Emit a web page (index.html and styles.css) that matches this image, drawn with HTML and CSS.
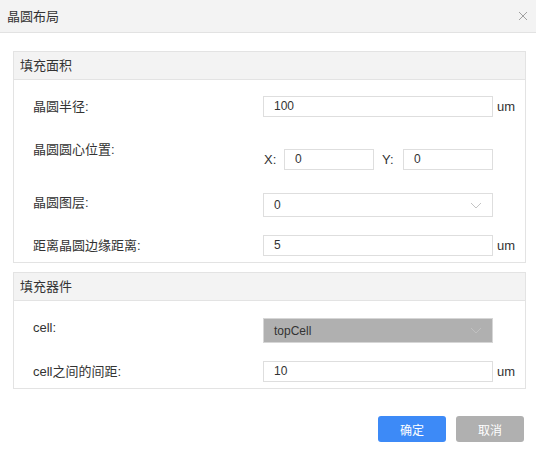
FILE: index.html
```html
<!DOCTYPE html>
<html>
<head>
<meta charset="utf-8">
<link rel="stylesheet" href="styles.css">
</head>
<body>
<div class="dialog">
  <div class="dlg-head">
    <span class="dlg-title">晶圆布局</span>
    <svg class="close" width="10" height="10" viewBox="0 0 10 10"><path d="M1 1L9 9M9 1L1 9" stroke="#a0a0a0" stroke-width="1" fill="none"/></svg>
  </div>
  <div class="dlg-body">
    <div class="section">
      <div class="sec-head">填充面积</div>
      <div class="sec-body">
        <div class="row r1">
          <div class="label">晶圆半径:</div>
          <div class="ctrl"><div class="input">100</div><span class="unit">um</span></div>
        </div>
        <div class="row r2">
          <div class="label">晶圆圆心位置:</div>
          <div class="ctrl xy">
            <span class="axis">X:</span><div class="input small">0</div>
            <span class="axis ay">Y:</span><div class="input small">0</div>
          </div>
        </div>
        <div class="row r3">
          <div class="label">晶圆图层:</div>
          <div class="ctrl"><div class="select">0<svg class="chev" width="12" height="7" viewBox="0 0 12 7"><path d="M1 1L6 6L11 1" stroke="#c4c4c4" stroke-width="1" fill="none"/></svg></div></div>
        </div>
        <div class="row r4">
          <div class="label">距离晶圆边缘距离:</div>
          <div class="ctrl"><div class="input">5</div><span class="unit">um</span></div>
        </div>
      </div>
    </div>
    <div class="section s2">
      <div class="sec-head">填充器件</div>
      <div class="sec-body b2">
        <div class="row r5">
          <div class="label">cell:</div>
          <div class="ctrl"><div class="select disabled">topCell<svg class="chev" width="12" height="7" viewBox="0 0 12 7"><path d="M1 1L6 6L11 1" stroke="#c0c0c0" stroke-width="1" fill="none"/></svg></div></div>
        </div>
        <div class="row r6">
          <div class="label">cell之间的间距:</div>
          <div class="ctrl"><div class="input">10</div><span class="unit">um</span></div>
        </div>
      </div>
    </div>
    <div class="footer">
      <button class="btn ok">确定</button>
      <button class="btn cancel">取消</button>
    </div>
  </div>
</div>
</body>
</html>
```

FILE: styles.css
```css
* { box-sizing: border-box; }
html, body { margin: 0; padding: 0; background: #fff; }
body {
  font-family: "Liberation Sans", "Noto Sans CJK SC", Arial, sans-serif;
  font-size: 13px;
  color: #333;
}
.dialog { width: 536px; height: 451px; background: #fff; }
.dlg-head {
  height: 33px;
  background: #f3f3f3;
  border-bottom: 1px solid #e2e2e2;
  display: flex;
  align-items: center;
  justify-content: space-between;
  padding: 0 8px 2px 7px;
}
.dlg-title { font-size: 13px; color: #333; }
.close { display: block; margin-top: 1px; }
.dlg-body { padding: 18px 10px 0 13px; }
.section { border: 1px solid #e3e3e3; }
.s2 { margin-top: 9px; }
.sec-head {
  height: 28px;
  line-height: 27px;
  background: #f3f3f3;
  border-bottom: 1px solid #e3e3e3;
  padding-left: 6px;
  color: #333;
}
.sec-body { padding: 16px 0 6px 19px; }
.b2 { padding-top: 17px; }
.row { display: flex; align-items: flex-start; }
.label { width: 230px; line-height: 21px; }
.ctrl { display: flex; align-items: center; }
.input {
  width: 230px;
  height: 21px;
  border: 1px solid #dedede;
  background: #fff;
  padding-left: 10px;
  font-size: 12px;
  line-height: 19px;
  color: #333;
}
.unit { margin-left: 4px; font-size: 13px; }
.r2 { margin-top: 23px; }
.r2 .label { line-height: 20px; }
.xy { margin-top: 9px; }
.axis { width: 21px; padding-left: 1px; }
.ay { width: 25px; margin-left: 4px; padding-left: 4px; }
.input.small { width: 90px; }
.r3 { margin-top: 23px; }
.r3 .label { line-height: 19px; }
.select {
  width: 230px;
  height: 24px;
  border: 1px solid #dedede;
  background: #fff;
  padding-left: 10px;
  font-size: 12px;
  line-height: 22px;
  display: flex;
  align-items: center;
  justify-content: space-between;
  padding-right: 10px;
}
.select.disabled { background: #b0b0b0; border-color: #d6d6d6; height: 25px; color: #333; }
.r4 { margin-top: 18px; }
.r5 .label { line-height: 20px; }
.r6 { margin-top: 18px; }
.footer {
  display: flex;
  justify-content: flex-end;
  gap: 10px;
  margin-top: 27px;
  margin-right: 2px;
}
.btn {
  width: 68px;
  height: 26px;
  border: none;
  border-radius: 3px;
  color: #fff;
  font-family: "Noto Sans CJK SC", sans-serif;
  font-size: 12px;
  padding: 0;
}
.ok { background: #3d8af7; }
.cancel { background: #b0b0b0; }
```
